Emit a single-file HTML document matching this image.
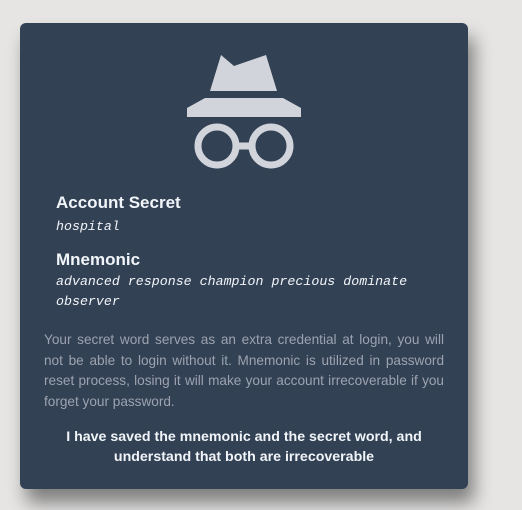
<!DOCTYPE html>
<html><head><style>
body{margin:0;width:522px;height:510px;background:#e6e5e4;font-family:"Liberation Sans",sans-serif;position:relative;overflow:hidden}
.card{position:absolute;left:20px;top:23px;width:448px;height:466px;background:#334155;border-radius:6px;box-shadow:6px 14px 18px rgba(0,0,0,.45)}
h{position:absolute;left:36px;font-weight:bold;font-size:17px;color:#f1f5f9}
.m{position:absolute;left:36px;font-family:"Liberation Mono",monospace;font-style:italic;font-size:13.3px;color:#f1f5f9;line-height:20px;width:390px}
.p{position:absolute;left:24px;width:400px;font-size:13.6px;line-height:20.5px;color:#9ca3af;text-align:justify}
.b{position:absolute;left:24px;width:400px;text-align:center;font-weight:bold;font-size:14.2px;line-height:19.5px;color:#f1f5f9}
</style></head><body>
<div class="card">
<svg style="position:absolute;left:0;top:0" width="448" height="160" viewBox="20 23 448 160">
<g fill="#d1d5db"><polygon points="221,55 234,66 266,55 277,91 210,91"/>
<polygon points="205,98 283,98 301,108 301,117 187,117 187,108"/></g>
<g fill="none" stroke="#d1d5db" stroke-width="7"><circle cx="217" cy="146" r="19"/><circle cx="271" cy="146" r="19"/><line x1="236" y1="146" x2="252" y2="146"/></g>
</svg>
<h style="top:170px">Account Secret</h>
<div class="m" style="top:194px">hospital</div>
<h style="top:227px">Mnemonic</h>
<div class="m" style="top:249px">advanced response champion precious dominate observer</div>
<div class="p" style="top:307px">Your secret word serves as an extra credential at login, you will not be able to login without it. Mnemonic is utilized in password reset process, losing it will make your account irrecoverable if you forget your password.</div>
<div class="b" style="top:405px">I have saved the mnemonic and the secret word, and understand that both are irrecoverable</div>
</div>
</body></html>
